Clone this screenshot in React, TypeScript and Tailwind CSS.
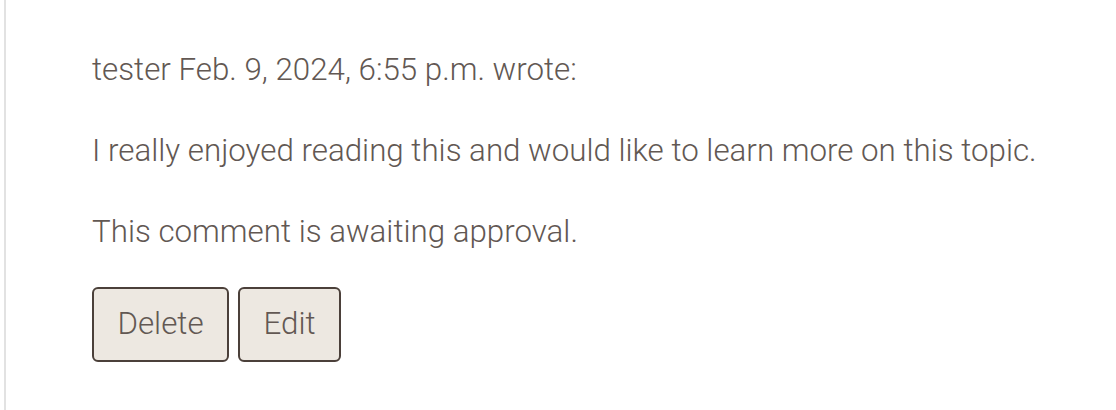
const App = () => {
  return (
    <div className="h-[410px] w-[1116px] bg-white font-['Roboto',sans-serif] font-light text-[#625853]">
      <div className="ml-1 flex h-full flex-col border-l-2 border-[#e2e2e2] pl-[86px] pt-[48px]">
        <p className="text-[31.3px] leading-[44px]">tester Feb. 9, 2024, 6:55 p.m. wrote:</p>
        <p className="mt-[37px] text-[31.3px] leading-[44px]">
          I really enjoyed reading this and would like to learn more on this topic.
        </p>
        <p className="mt-[37px] text-[31.3px] leading-[44px]">This comment is awaiting approval.</p>
        <div className="mt-[33px] flex gap-[9px]">
          <button className="h-[75px] w-[137px] rounded-[6px] border-2 border-[#4b403a] bg-[#ede8e1] text-[31.3px] font-light text-[#625853]">
            Delete
          </button>
          <button className="h-[75px] w-[103px] rounded-[6px] border-2 border-[#4b403a] bg-[#ede8e1] text-[31.3px] font-light text-[#625853]">
            Edit
          </button>
        </div>
      </div>
    </div>
  );
};

export default App;
